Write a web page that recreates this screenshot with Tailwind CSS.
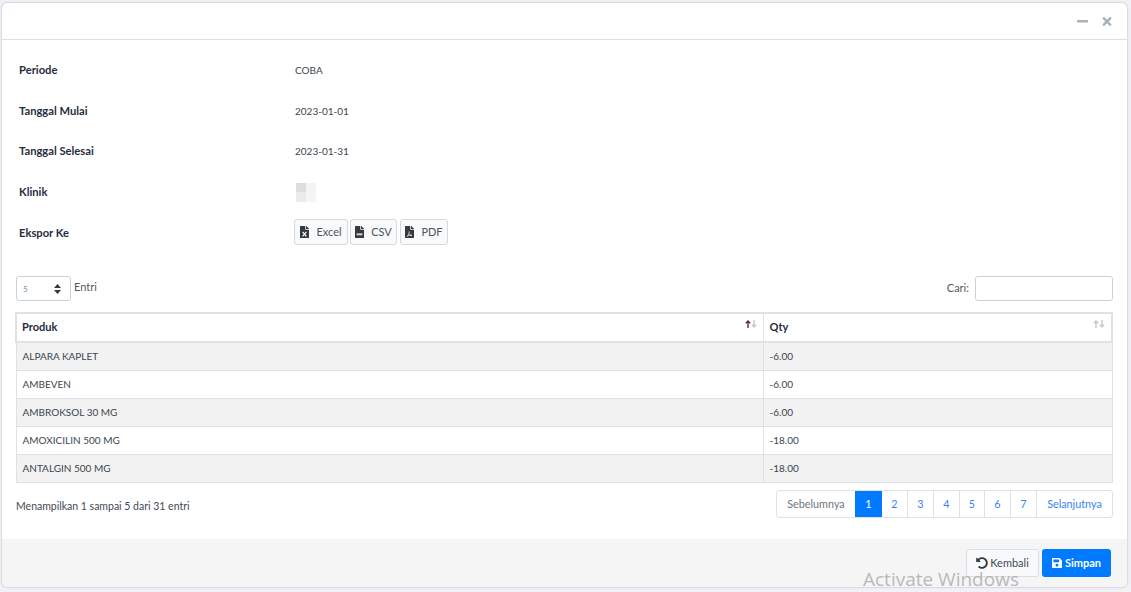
<!DOCTYPE html>
<html lang="en">
<head>
    <meta charset="UTF-8">
    <meta name="viewport" content="width=device-width, initial-scale=1.0">
    <title>Stok Opname</title>
    <script src="https://cdn.jsdelivr.net/npm/@tailwindcss/browser@4"></script>
</head>
<body class="bg-[#f1f2f7] h-[592px] overflow-hidden relative font-['Lato',sans-serif] text-[#212529]">

    <!-- Card -->
    <div class="ml-[2px] mt-[3px] w-[1125px] h-[584px] bg-white rounded-[5px] shadow-[0_0_2px_rgba(0,0,0,0.35)] overflow-hidden flex flex-col">

        <!-- Header -->
        <div class="h-[37px] shrink-0 border-b border-[#dcdfe3] flex items-center justify-end gap-[14px] pr-[15px]">
            <svg class="w-[11px] h-[11px] text-[#a8b0b8]" viewBox="0 0 11 11" fill="currentColor"><rect y="4" width="11" height="2.4" rx="0.6"/></svg>
            <svg class="w-[10px] h-[13px] text-[#a8b0b8]" viewBox="0 0 352 512" fill="currentColor"><path d="M242.72 256l100.07-100.07c12.28-12.28 12.28-32.19 0-44.48l-22.24-22.24c-12.28-12.28-32.19-12.28-44.48 0L176 189.28 75.93 89.21c-12.28-12.28-32.19-12.28-44.48 0L9.21 111.45c-12.28 12.28-12.28 32.19 0 44.48L109.28 256 9.21 356.07c-12.28 12.28-12.28 32.19 0 44.48l22.24 22.24c12.28 12.28 32.2 12.28 44.48 0L176 322.72l100.07 100.07c12.28 12.28 32.2 12.28 44.48 0l22.24-22.24c12.28-12.28 12.28-32.19 0-44.48L242.72 256z"/></svg>
        </div>

        <!-- Body -->
        <div class="flex-1 px-[14px]">
            <!-- Detail rows -->
            <div class="pt-[10px] pl-[3px] text-[10px]">
                <div class="flex items-center h-[41px]"><div class="w-[276px] font-bold text-[11.2px] text-[#1f2d3d]">Periode</div><div class="text-[#3a4650]">COBA</div></div>
                <div class="flex items-center h-[41px]"><div class="w-[276px] font-bold text-[11.2px] text-[#1f2d3d]">Tanggal Mulai</div><div class="text-[#3a4650]">2023-01-01</div></div>
                <div class="flex items-center h-[39.5px]"><div class="w-[276px] font-bold text-[11.2px] text-[#1f2d3d]">Tanggal Selesai</div><div class="text-[#3a4650]">2023-01-31</div></div>
                <div class="flex items-center h-[41.5px]"><div class="w-[276px] font-bold text-[11.2px] text-[#1f2d3d]">Klinik</div>
                    <div class="ml-[1px] grid grid-cols-2 w-[20px] h-[19px]">
                        <div class="bg-[#dedee2]"></div><div class="bg-[#f3f3f5]"></div>
                        <div class="bg-[#ebebee]"></div><div class="bg-[#f5f5f6]"></div>
                    </div>
                </div>
                <div class="flex items-center h-[41px]"><div class="w-[275px] font-bold text-[11.2px] text-[#1f2d3d]">Ekspor Ke</div>
                    <div class="flex -mt-[4px]">
                        <button class="w-[54px] h-[26px] pt-[2px] flex items-center justify-center gap-[7px] bg-[#f8f9fa] border border-[#d5d9dd] rounded-[3px] text-[#4a5560] text-[11px]">
                            <svg class="w-[9px] h-[12px] -mt-[2px] text-[#343a40]" viewBox="0 0 384 512" fill="currentColor"><path d="M224 136V0H24C10.7 0 0 10.7 0 24v464c0 13.3 10.7 24 24 24h336c13.3 0 24-10.7 24-24V160H248c-13.2 0-24-10.8-24-24zm160-14.1v6.1H256V0h6.1c6.4 0 12.5 2.5 17 7l97.9 98c4.5 4.5 7 10.6 7 16.9z"/><path d="M110 250l164 190M274 250L110 440" stroke="#fff" stroke-width="50" fill="none"/></svg>
                            Excel
                        </button>
                        <button class="ml-[2px] w-[47px] h-[26px] pt-[2px] flex items-center justify-center gap-[7px] bg-[#f8f9fa] border border-[#d5d9dd] rounded-[3px] text-[#4a5560] text-[11px]">
                            <svg class="w-[9px] h-[12px] -mt-[2px] text-[#343a40]" viewBox="0 0 384 512" fill="currentColor"><path d="M224 136V0H24C10.7 0 0 10.7 0 24v464c0 13.3 10.7 24 24 24h336c13.3 0 24-10.7 24-24V160H248c-13.2 0-24-10.8-24-24zm160-14.1v6.1H256V0h6.1c6.4 0 12.5 2.5 17 7l97.9 98c4.5 4.5 7 10.6 7 16.9z"/><rect x="70" y="310" width="244" height="90" fill="#fff" opacity="0.75"/></svg>
                            CSV
                        </button>
                        <button class="ml-[3px] w-[48px] h-[26px] pt-[2px] flex items-center justify-center gap-[7px] bg-[#f8f9fa] border border-[#d5d9dd] rounded-[3px] text-[#4a5560] text-[11px]">
                            <svg class="w-[9px] h-[12px] -mt-[2px] text-[#343a40]" viewBox="0 0 384 512" fill="currentColor"><path d="M224 136V0H24C10.7 0 0 10.7 0 24v464c0 13.3 10.7 24 24 24h336c13.3 0 24-10.7 24-24V160H248c-13.2 0-24-10.8-24-24zm160-14.1v6.1H256V0h6.1c6.4 0 12.5 2.5 17 7l97.9 98c4.5 4.5 7 10.6 7 16.9z"/><path d="M180 230c10 90-40 170-90 210M180 330c30 50 70 70 120 70M90 440c60-40 130-50 210-40" stroke="#fff" stroke-width="30" fill="none"/></svg>
                            PDF
                        </button>
                    </div>
                </div>
            </div>

            <!-- Length + search -->
            <div class="mt-[22px] flex justify-between">
                <div class="flex items-start text-[11px] text-[#55595f]">
                    <div class="w-[55px] h-[25px] border border-[#ccd1d6] rounded-[3px] flex items-center justify-between pl-[6px] pr-[9px] text-[8px] text-[#6f8fb5]">
                        5
                        <svg class="w-[7px] h-[10px] text-[#343a40]" viewBox="0 0 7 10" fill="currentColor"><path d="M3.5 0L7 4H0zM3.5 10L0 6h7z"/></svg>
                    </div>
                    <span class="ml-[3px] mt-[3px]">Entri</span>
                </div>
                <div class="flex items-center text-[11px] text-[#55595f]">
                    Cari:
                    <div class="ml-[6px] w-[138px] h-[25px] border border-[#ccd1d6] rounded-[3px]"></div>
                </div>
            </div>

            <!-- Table -->
            <table class="mt-[11px] -ml-px w-[1098px] table-fixed border-collapse text-[10px] text-[#3a4650]">
                <thead>
                    <tr class="h-[29px] border-2 border-[#dee2e6]">
                        <th class="relative w-[747px] text-left pl-[5px] font-bold text-[11px] text-[#1f2d3d] border-r border-[#dee2e6]">
                            Produk
                            <svg class="absolute right-[6px] top-[6px] w-[12px] h-[8px]" viewBox="0 0 12 8" fill="none" stroke-width="1.4"><path d="M3 8V1M0.8 3.2L3 1l2.2 2.2" stroke="#5a3030"/><path d="M9 0v7M6.8 4.8L9 7l2.2-2.2" stroke="#c4c8cc"/></svg>
                        </th>
                        <th class="relative text-left pl-[6px] font-bold text-[11px] text-[#1f2d3d]">
                            Qty
                            <svg class="absolute right-[6px] top-[6px] w-[12px] h-[8px]" viewBox="0 0 12 8" fill="none" stroke-width="1.4" stroke="#c4c8cc"><path d="M3 8V1M0.8 3.2L3 1l2.2 2.2"/><path d="M9 0v7M6.8 4.8L9 7l2.2-2.2"/></svg>
                        </th>
                    </tr>
                </thead>
                <tbody>
                    <tr class="h-[28px] bg-[#f2f2f2]"><td class="pl-[6px] border border-[#dee2e6]">ALPARA KAPLET</td><td class="pl-[6px] border border-[#dee2e6]">-6.00</td></tr>
                    <tr class="h-[28px]"><td class="pl-[6px] border border-[#dee2e6]">AMBEVEN</td><td class="pl-[6px] border border-[#dee2e6]">-6.00</td></tr>
                    <tr class="h-[28px] bg-[#f2f2f2]"><td class="pl-[6px] border border-[#dee2e6]">AMBROKSOL 30 MG</td><td class="pl-[6px] border border-[#dee2e6]">-6.00</td></tr>
                    <tr class="h-[28px]"><td class="pl-[6px] border border-[#dee2e6]">AMOXICILIN 500 MG</td><td class="pl-[6px] border border-[#dee2e6]">-18.00</td></tr>
                    <tr class="h-[28px] bg-[#f2f2f2]"><td class="pl-[6px] border border-[#dee2e6]">ANTALGIN 500 MG</td><td class="pl-[6px] border border-[#dee2e6]">-18.00</td></tr>
                </tbody>
            </table>

            <!-- Info + pagination -->
            <div class="mt-[7px] flex justify-between items-start">
                <div class="mt-[9px] text-[10.5px] text-[#3f4a55]">Menampilkan 1 sampai 5 dari 31 entri</div>
                <div class="flex h-[28px] text-[10.8px] text-[#3b82f6] border border-[#dee2e6] rounded-[3px]">
                    <div class="w-[78px] pt-[1px] flex items-center justify-center text-[#6c757d]">Sebelumnya</div>
                    <div class="w-[27px] pt-[1px] flex items-center justify-center bg-[#007bff] text-white">1</div>
                    <div class="w-[26px] pt-[1px] flex items-center justify-center border-r border-[#dee2e6]">2</div>
                    <div class="w-[26px] pt-[1px] flex items-center justify-center border-r border-[#dee2e6]">3</div>
                    <div class="w-[26px] pt-[1px] flex items-center justify-center border-r border-[#dee2e6]">4</div>
                    <div class="w-[25px] pt-[1px] flex items-center justify-center border-r border-[#dee2e6]">5</div>
                    <div class="w-[26px] pt-[1px] flex items-center justify-center border-r border-[#dee2e6]">6</div>
                    <div class="w-[26px] pt-[1px] flex items-center justify-center border-r border-[#dee2e6]">7</div>
                    <div class="flex-1 min-w-[75px] pt-[1px] flex items-center justify-center">Selanjutnya</div>
                </div>
            </div>
        </div>

        <!-- Footer -->
        <div class="h-[48px] shrink-0 bg-[#f5f5f5] flex justify-end gap-[3px] pt-[10px] pr-[16px] text-[11px]">
            <button class="w-[73px] h-[28px] flex items-center justify-center gap-[2px] bg-[#f8f9fa] border border-[#dcdfe3] rounded-[3px] text-[#3f4a55]">
                <svg class="w-[12px] h-[12px] text-[#343a40]" viewBox="0 0 512 512" fill="currentColor"><path d="M255.545 8c-66.269.119-126.438 26.233-170.86 68.685L48.971 40.971C33.851 25.851 8 36.559 8 57.941V192c0 13.255 10.745 24 24 24h134.059c21.382 0 32.09-25.851 16.971-40.971l-41.75-41.75c30.864-28.899 70.801-44.907 113.23-45.273 92.398-.798 170.283 73.977 169.484 169.442C423.236 348.009 349.816 424 256 424c-41.127 0-79.997-14.678-110.63-41.556-4.743-4.161-11.906-3.908-16.368.553L89.34 422.659c-4.872 4.872-4.631 12.815.482 17.433C133.798 479.813 192.074 504 256 504c136.966 0 247.999-111.033 248-247.998C504.001 119.193 392.354 7.755 255.545 8z"/></svg>
                Kembali
            </button>
            <button class="w-[69px] h-[28px] flex items-center justify-center gap-[3px] bg-[#007bff] rounded-[3px] text-white font-bold">
                <svg class="w-[10px] h-[12px]" viewBox="0 0 448 512" fill="currentColor"><path d="M433.941 129.941l-83.882-83.882A48 48 0 0 0 316.118 32H48C21.49 32 0 53.49 0 80v352c0 26.51 21.49 48 48 48h352c26.51 0 48-21.49 48-48V163.882a48 48 0 0 0-14.059-33.941zM224 416c-35.346 0-64-28.654-64-64 0-35.346 28.654-64 64-64s64 28.654 64 64c0 35.346-28.654 64-64 64zm96-304.52V212c0 6.627-5.373 12-12 12H76c-6.627 0-12-5.373-12-12V108c0-6.627 5.373-12 12-12h228.52c3.183 0 6.235 1.264 8.485 3.515l3.48 3.48A11.996 11.996 0 0 1 320 111.48z"/></svg>
                Simpan
            </button>
        </div>
    </div>

    <!-- Windows watermark -->
    <div class="absolute left-[863px] top-[566px] text-[19px] leading-[26px] text-[#a9a9a9]/80 font-['Open_Sans',sans-serif] whitespace-nowrap">Activate Windows</div>
</body>
</html>
